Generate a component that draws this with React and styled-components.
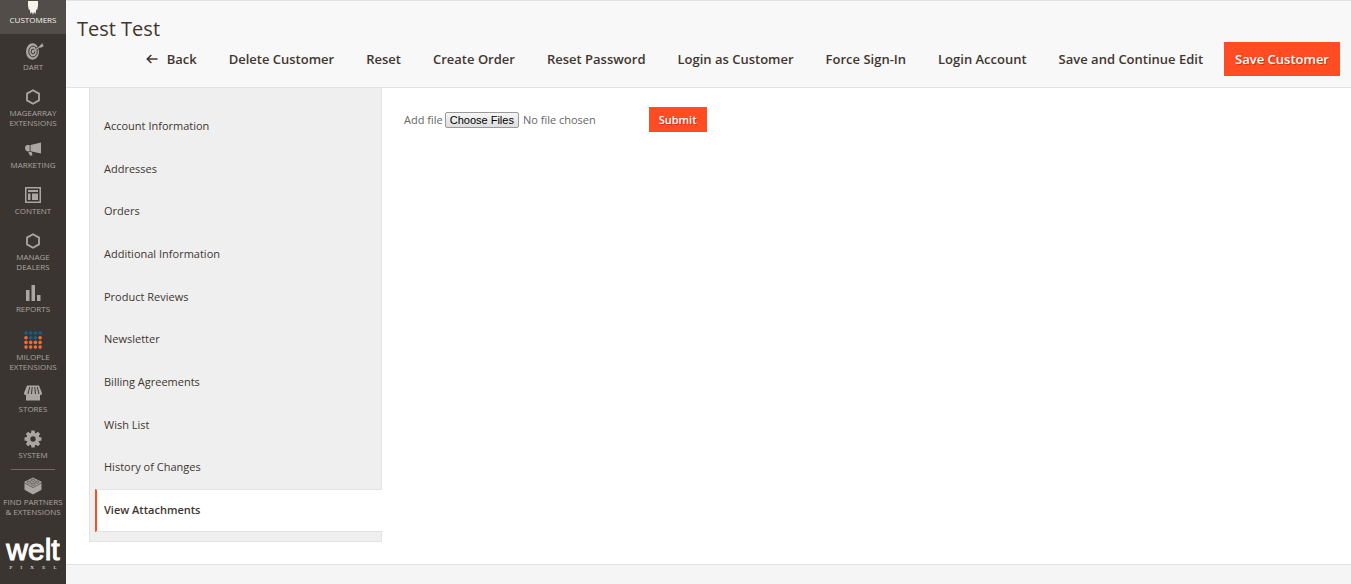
import React, { useState } from 'react';
import styled, { createGlobalStyle } from 'styled-components';

const GlobalStyle = createGlobalStyle`
    * {
        box-sizing: border-box;
    }

    body {
        margin: 0;
        background: #fff;
        color: #41362f;
        font-family: 'Open Sans', 'Noto Sans', sans-serif;
        font-size: 11px;
    }
`

const CustomersIcon = () => (
    <svg width='18' height='22' viewBox='0 0 18 22' fill='currentColor' aria-hidden='true'>
        <circle cx='9' cy='4' r='3' />
        <path d='M4 8h10v5l-1 4.500-.8-1.500-.7 5-1.500-2-1 3-1-3-1.500 2-.7-5-.8 1.500L4 13z' />
    </svg>
)

const DartIcon = () => (
    <svg width='22' height='18' viewBox='0 0 22 18' fill='none' stroke='currentColor' aria-hidden='true'>
        <ellipse cx='10.500' cy='9.500' rx='6.500' ry='8.200' fill='currentColor' stroke='none' />
        <ellipse cx='11' cy='9.500' rx='4.200' ry='5.400' stroke='#3a3530' />
        <ellipse cx='11' cy='9.500' rx='1.800' ry='2.400' stroke='#3a3530' />
        <path d='M14 7.400L18.500 4' stroke='#3a3530' strokeWidth='2.500' />
        <path d='M11 9.500L19 4' strokeWidth='1.200' />
        <path d='M17 4.500L20.500 1l.4 2 1 1-3 1.700z' fill='currentColor' stroke='none' />
    </svg>
)

const HexagonIcon = () => (
    <svg width='16' height='16' viewBox='0 0 16 16' fill='none' stroke='currentColor' strokeWidth='1.800' aria-hidden='true'>
        <path d='M8 1.200L14 4.600v6.800L8 14.800 2 11.400V4.600z' />
    </svg>
)

const MarketingIcon = () => (
    <svg width='18' height='16' viewBox='0 0 18 16' fill='currentColor' aria-hidden='true'>
        <path d='M6.500 4L17 1.500v11L6.500 10.300z' />
        <path d='M5.700 4v6.200H2.800Q1 9.700 1 7.100T2.800 4z' />
        <path d='M4 10.600l3.800.7.7 3-2.500.4z' />
    </svg>
)

const ContentIcon = () => (
    <svg width='18' height='18' viewBox='0 0 18 18' fill='currentColor' aria-hidden='true'>
        <path fillRule='evenodd' d='M1 1h16v16H1zM2.500 2.500v13h13v-13z' />
        <path d='M4 4h10v2H4zM4 7.500h2.500V14H4zM8 7.500h6V14H8z' />
    </svg>
)

const ReportsIcon = () => (
    <svg width='16' height='16' viewBox='0 0 16 16' fill='currentColor' aria-hidden='true'>
        <path d='M1 5h3.500v11H1zM6.500 0H10v16H6.500zM12 10h3.500v6H12z' />
    </svg>
)

const dotRows = ['bbbb', 'obbo', 'oooo', 'oooo'];

const MilopleIcon = () => (
    <svg width='20' height='18' viewBox='0 0 20 18' aria-hidden='true'>
        {dotRows.map((row, y) => row.split('').map((dot, x) => (
            <circle
                key={`${x}-${y}`}
                cx={3 + x * 4.7}
                cy={2 + y * 4.7}
                r='1.800'
                fill={dot === 'b' ? '#12618f' : '#f26b35'}
            />
        )))}
    </svg>
)

const StoresIcon = () => (
    <svg width='18' height='16' viewBox='0 0 18 16' fill='currentColor' aria-hidden='true'>
        <path d='M3 .5h12L18 8l-.5 2H.5L0 8z' />
        <path d='M2 9h14v6.500H2z' />
        <path d='M5.700 2L4 9M8.200 2L7.500 9M10.800 2l.7 7M13.300 2l1.700 7' stroke='#3a3530' />
    </svg>
)

const SystemIcon = () => (
    <svg width='18' height='18' viewBox='0 0 18 18' fill='currentColor' aria-hidden='true'>
        {[0, 45, 90, 135].map(angle => (
            <path key={angle} d='M7.400.5h3.200l.6 3.500H6.800zM6.800 14h4.400l-.6 3.500H7.400z' transform={`rotate(${angle} 9 9)`} />
        ))}
        <circle cx='9' cy='9' r='4.500' fill='none' stroke='currentColor' strokeWidth='3.600' />
    </svg>
)

const PartnersIcon = () => (
    <svg width='18' height='18' viewBox='0 0 18 18' fill='currentColor' aria-hidden='true'>
        <path d='M9 .5l8.500 4.300v8L9 17.500.5 12.800v-8z' />
        <path d='M.5 6l8.500 4.500L17.500 6' fill='none' stroke='#3a3530' strokeWidth='.6' />
        <g fill='none' stroke='#3a3530' strokeWidth='.6'>
            <ellipse cx='9' cy='3.200' rx='1.900' ry='1.100' />
            <ellipse cx='5' cy='5.200' rx='1.900' ry='1.100' />
            <ellipse cx='13' cy='5.200' rx='1.900' ry='1.100' />
            <ellipse cx='9' cy='7.200' rx='1.900' ry='1.100' />
        </g>
    </svg>
)

const BackIcon = () => (
    <svg width='12' height='10' viewBox='0 0 12 10' fill='none' stroke='currentColor' strokeWidth='1.600' aria-hidden='true'>
        <path d='M11.500 5H1.500M5.300 1L1.300 5l4 4' />
    </svg>
)

const menuItems = [
    { label: 'Customers', Icon: CustomersIcon, active: true },
    { label: 'Dart', Icon: DartIcon },
    { label: 'Magearray Extensions', Icon: HexagonIcon },
    { label: 'Marketing', Icon: MarketingIcon },
    { label: 'Content', Icon: ContentIcon },
    { label: 'Manage Dealers', Icon: HexagonIcon },
    { label: 'Reports', Icon: ReportsIcon },
    { label: 'Milople Extensions', Icon: MilopleIcon, tall: true },
    { label: 'Stores', Icon: StoresIcon },
    { label: 'System', Icon: SystemIcon },
];

const actions = [
    'Delete Customer',
    'Reset',
    'Create Order',
    'Reset Password',
    'Login as Customer',
    'Force Sign-In',
    'Login Account',
    'Save and Continue Edit',
];

const tabs = [
    'Account Information',
    'Addresses',
    'Orders',
    'Additional Information',
    'Product Reviews',
    'Newsletter',
    'Billing Agreements',
    'Wish List',
    'History of Changes',
    'View Attachments',
];

const App = () => {
    const [activeTab, setActiveTab] = useState('View Attachments');

    const selectTab = (event, tab) => {
        event.preventDefault();
        setActiveTab(tab);
    }

    return (
        <Page>
            <GlobalStyle />
            <Sidebar>
                <Menu>
                    {menuItems.map(({ label, Icon, active, tall }) => (
                        <li key={label}>
                            <MenuLink href='#' $active={active}>
                                <IconBox $tall={tall}><Icon /></IconBox>
                                <MenuLabel>{label}</MenuLabel>
                            </MenuLink>
                        </li>
                    ))}
                </Menu>
                <Divider />
                <MenuLink href='#'>
                    <IconBox><PartnersIcon /></IconBox>
                    <MenuLabel $wide>Find Partners & Extensions</MenuLabel>
                </MenuLink>
                <Logo href='#' aria-label='welt pixel'>
                    <LogoName>welt</LogoName>
                    <LogoTag>
                        {'PIXEL'.split('').map(letter => <span key={letter}>{letter}</span>)}
                    </LogoTag>
                </Logo>
            </Sidebar>
            <Wrapper>
                <Header>
                    <Title>Test Test</Title>
                    <Actions>
                        <ActionButton type='button'><BackIcon />Back</ActionButton>
                        {actions.map(action => (
                            <ActionButton key={action} type='button'>{action}</ActionButton>
                        ))}
                        <ActionButton type='button' $primary>Save Customer</ActionButton>
                    </Actions>
                </Header>
                <Content>
                    <Tabs>
                        {tabs.map(tab => (
                            <TabItem key={tab}>
                                <TabLink href='#' $active={tab === activeTab} onClick={event => selectTab(event, tab)}>
                                    {tab}
                                </TabLink>
                            </TabItem>
                        ))}
                    </Tabs>
                    <UploadForm onSubmit={event => event.preventDefault()}>
                        <label htmlFor='attachments'>Add file</label>
                        <FileInput id='attachments' type='file' multiple />
                        <SubmitButton>Submit</SubmitButton>
                    </UploadForm>
                </Content>
                <Footer />
            </Wrapper>
        </Page>
    )
}

const Page = styled.div`
    display: flex;
    min-height: 100vh;
`

const Sidebar = styled.nav`
    flex: none;
    width: 66px;
    background: #3a3530;
    overflow: hidden;
`

const Menu = styled.ul`
    list-style: none;
    margin: -13px 0 0;
    padding: 0;
`

const MenuLink = styled.a`
    display: flex;
    flex-direction: column;
    align-items: center;
    min-height: ${props => props.$active ? '47px' : '46px'};
    padding: 6px 0 4px;
    background: ${props => props.$active ? '#524d49' : 'transparent'};
    color: ${props => props.$active ? '#f7f3eb' : '#aaa6a0'};
    text-decoration: none;
`

const IconBox = styled.span`
    display: flex;
    align-items: center;
    justify-content: center;
    height: ${props => props.$tall ? '24px' : '22px'};
`

const MenuLabel = styled.span`
    width: ${props => props.$wide ? '64px' : '54px'};
    font-size: 8px;
    line-height: 10px;
    text-align: center;
    text-transform: uppercase;
`

const Divider = styled.hr`
    width: 44px;
    height: 1px;
    margin: 1px auto -1px;
    border: 0;
    background: #736963;
`

const Logo = styled.a`
    display: flex;
    flex-direction: column;
    align-items: center;
    margin-top: 14px;
    color: #fff;
    text-decoration: none;
`

const LogoName = styled.span`
    font-family: 'Liberation Sans', Arial, sans-serif;
    font-size: 30px;
    line-height: 30px;
    -webkit-text-stroke: 1px #fff;
`

const LogoTag = styled.span`
    display: flex;
    justify-content: space-between;
    width: 47px;
    font-family: 'Liberation Serif', 'Times New Roman', serif;
    font-size: 5px;
    line-height: 6px;
`

const Wrapper = styled.div`
    flex: 1;
    display: flex;
    flex-direction: column;
    min-width: 0;
`

const Header = styled.header`
    padding: 14px 11px 11px;
    border-top: 1px solid #e3e3e3;
    border-bottom: 1px solid #e3e3e3;
    background: #f8f8f8;
`

const Title = styled.h1`
    margin: 0;
    font-size: 20px;
    font-weight: 400;
    line-height: 27px;
`

const Actions = styled.div`
    display: flex;
    justify-content: flex-end;
    gap: 10px;
`

const ActionButton = styled.button`
    display: flex;
    align-items: center;
    gap: 9px;
    height: 34px;
    padding: 0 11px;
    border: 0;
    background: ${props => props.$primary ? '#ff4c22' : 'transparent'};
    color: ${props => props.$primary ? '#fff' : '#41362f'};
    font-family: inherit;
    font-size: 13px;
    font-weight: 600;
    white-space: nowrap;
    text-shadow: ${props => props.$primary ? '1px 1px 0 rgba(0, 0, 0, .25)' : 'none'};
    cursor: pointer;
`

const Content = styled.main`
    flex: 1;
    display: flex;
    align-items: flex-start;
    gap: 22px;
    padding: 0 23px 22px;
`

const Tabs = styled.ul`
    flex: none;
    display: grid;
    grid-auto-rows: 1fr;
    width: 293px;
    min-height: 454px;
    list-style: none;
    margin: 0;
    padding: 17px 0 9px;
    border: 1px solid #e3e3e3;
    border-top: 0;
    background: #efefef;
`

const TabItem = styled.li`
    display: flex;
    margin: 0 -1px 0 5px;
`

const TabLink = styled.a`
    flex: 1;
    display: flex;
    align-items: center;
    padding: 0 0 2px 7px;
    border: solid transparent;
    border-width: 1px 0 1px 2px;
    color: #41362f;
    text-decoration: none;

    ${props => props.$active && `
        border-color: #e3e3e3;
        border-left-color: #ff4c22;
        background: #fff;
        font-weight: 600;
    `}
`

const UploadForm = styled.form`
    display: flex;
    align-items: center;
    gap: 2px;
    margin-top: 19px;
    color: #666;
`

const FileInput = styled.input`
    width: 202px;
    font-family: inherit;
    font-size: 11px;
    color: #666;

    &::file-selector-button {
        height: 16px;
        margin-right: 4px;
        padding: 0 4px;
        border: 1px solid #999;
        border-radius: 2px;
        background: linear-gradient(#f6f6f6, #dedede);
        color: #000;
        font-family: 'Liberation Sans', Arial, sans-serif;
        font-size: 11px;
    }
`

const SubmitButton = styled.button`
    height: 25px;
    padding: 0 10px;
    border: 0;
    background: #ff4c22;
    color: #fff;
    font-family: inherit;
    font-size: 11px;
    font-weight: 600;
    text-shadow: 1px 1px 0 rgba(0, 0, 0, .25);
    cursor: pointer;
`

const Footer = styled.footer`
    flex: none;
    height: 20px;
    border-top: 1px solid #e3e3e3;
    background: #f5f5f5;
`

export default App;
